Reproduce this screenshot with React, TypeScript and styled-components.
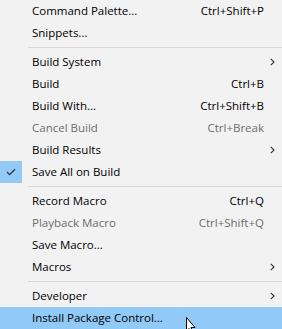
import React from "react";
import styled, { createGlobalStyle } from "styled-components";

const Global = createGlobalStyle`
  html, body { margin: 0; padding: 0; background: #f2f2f2; }
  body { width: 282px; height: 329px; overflow: hidden; }
`;

const Menu = styled.div`
  position: relative;
  width: 282px;
  height: 329px;
  background: #f2f2f2;
  display: flex;
  flex-direction: column;
  font-family: "Open Sans", "Noto Sans", sans-serif;
  font-size: 11.5px;
  color: #000;
`;

const Row = styled.div<{ $hl?: boolean; $disabled?: boolean }>`
  height: 22px;
  flex: none;
  display: grid;
  grid-template-columns: 22px 10px 1fr auto 18px;
  align-items: center;
  background: ${(p) => (p.$hl ? "#91c9f7" : "transparent")};
  color: ${(p) => (p.$disabled ? "#6d6d6d" : "#000")};
  white-space: nowrap;
`;

const Gutter = styled.div<{ $checked?: boolean }>`
  height: 22px;
  display: flex;
  align-items: center;
  justify-content: center;
  background: ${(p) => (p.$checked ? "#91c9f7" : "transparent")};
`;

const Label = styled.span`
  grid-column: 3;
  line-height: 22px;
`;

const Shortcut = styled.span`
  grid-column: 4;
  line-height: 22px;
  text-align: right;
`;

const Arrow = styled.div`
  grid-column: 5;
  display: flex;
  align-items: center;
  justify-content: center;
  padding-right: 2px;
`;

const Separator = styled.div`
  height: 7px;
  flex: none;
  display: flex;
  align-items: center;
  padding-left: 28px;
  &::after {
    content: "";
    flex: 1;
    height: 1px;
    background: #d7d7d7;
  }
`;

const Cursor = styled.svg`
  position: absolute;
  left: 186px;
  top: 317px;
`;

type Item =
  | { sep: true }
  | {
      sep?: false;
      label: string;
      shortcut?: string;
      sub?: boolean;
      disabled?: boolean;
      checked?: boolean;
      hl?: boolean;
    };

const items: Item[] = [
  { label: "Command Palette...", shortcut: "Ctrl+Shift+P" },
  { label: "Snippets..." },
  { sep: true },
  { label: "Build System", sub: true },
  { label: "Build", shortcut: "Ctrl+B" },
  { label: "Build With...", shortcut: "Ctrl+Shift+B" },
  { label: "Cancel Build", shortcut: "Ctrl+Break", disabled: true },
  { label: "Build Results", sub: true },
  { label: "Save All on Build", checked: true },
  { sep: true },
  { label: "Record Macro", shortcut: "Ctrl+Q" },
  { label: "Playback Macro", shortcut: "Ctrl+Shift+Q", disabled: true },
  { label: "Save Macro..." },
  { label: "Macros", sub: true },
  { sep: true },
  { label: "Developer", sub: true },
  { label: "Install Package Control...", hl: true },
];

const Check = () => (
  <svg width="10" height="8" viewBox="0 0 10 8">
    <path d="M1 4 L3.6 6.6 L9 1.2" fill="none" stroke="#333" strokeWidth="1.3" />
  </svg>
);

const Chevron = () => (
  <svg width="5" height="8" viewBox="0 0 5 8">
    <path d="M0.8 0.8 L4 4 L0.8 7.2" fill="none" stroke="#333" strokeWidth="1.1" />
  </svg>
);

export default function App() {
  return (
    <>
      <Global />
      <Menu>
        {items.map((it, i) =>
          it.sep ? (
            <Separator key={i} />
          ) : (
            <Row key={i} $hl={it.hl} $disabled={it.disabled}>
              <Gutter $checked={it.checked}>{it.checked && <Check />}</Gutter>
              <Label>{it.label}</Label>
              <Shortcut>{it.shortcut}</Shortcut>
              <Arrow>{it.sub && <Chevron />}</Arrow>
            </Row>
          )
        )}
        <Cursor width="14" height="14" viewBox="0 0 14 14">
          <path d="M0.5 0.5 L0.5 14 L3 11.5 L5 16 L7 15 L5 10.5 L9 10.5 Z" fill="#fff" stroke="#000" strokeWidth="1" />
        </Cursor>
      </Menu>
    </>
  );
}
